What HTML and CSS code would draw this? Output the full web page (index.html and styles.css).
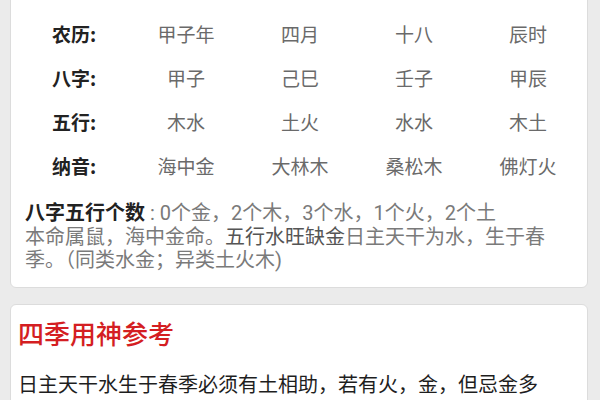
FILE: index.html
```html
<!DOCTYPE html>
<html lang="zh">
<head>
<meta charset="utf-8">
<link rel="stylesheet" href="styles.css">
</head>
<body>
<div class="page">
  <section class="card card-top">
    <div class="table">
      <div class="lbl">公历:</div><div class="val">1984年</div><div class="val">4月</div><div class="val">18日</div><div class="val">8时</div>
      <div class="lbl">农历:</div><div class="val">甲子年</div><div class="val">四月</div><div class="val">十八</div><div class="val">辰时</div>
      <div class="lbl">八字:</div><div class="val">甲子</div><div class="val">己巳</div><div class="val">壬子</div><div class="val">甲辰</div>
      <div class="lbl">五行:</div><div class="val">木水</div><div class="val">土火</div><div class="val">水水</div><div class="val">木土</div>
      <div class="lbl">纳音:</div><div class="val">海中金</div><div class="val">大林木</div><div class="val">桑松木</div><div class="val">佛灯火</div>
    </div>
    <p class="summary"><span class="line"><b>八字五行个数</b> : 0个金，2个木，3个水，1个火，2个土</span><span class="line">本命属鼠，海中金命。<span class="em">五行水旺缺金</span>日主天干为水，生于春季。（同类水金；异类土火木)</span></p>
  </section>
  <section class="card card-second">
    <h2 class="title">四季用神参考</h2>
    <p class="body">日主天干水生于春季必须有土相助，若有火，金，但忌金多</p>
  </section>
</div>
</body>
</html>
```
FILE: styles.css
```css
html, body {
  margin: 0;
  padding: 0;
}
body {
  width: 600px;
  height: 400px;
  overflow: hidden;
  background: #ebebeb;
  font-family: "Noto Sans CJK SC", "Noto Sans", sans-serif;
}
.page {
  display: flex;
  flex-direction: column;
  gap: 16px;
  padding: 0 12px 0 10px;
  margin-top: -34px;
}
.card {
  background: #fff;
  border: 1px solid #dcdcdc;
  border-radius: 6px;
}
.card-top {
  padding: 0 0 14px 0;
}
.table {
  display: grid;
  grid-template-columns: 118px repeat(4, 114px);
  grid-auto-rows: 44px;
  align-items: center;
}
.lbl {
  padding-left: 41px;
  font-size: 19px;
  font-weight: 700;
  color: #222;
}
.val {
  text-align: center;
  font-size: 19px;
  color: #6a6a6a;
}
.summary {
  margin: 15px 24px 0 14px;
  font-family: "Roboto", "Noto Sans CJK SC", sans-serif;
  font-size: 20px;
  line-height: 23.7px;
  color: #7a7a7a;
}
.summary .line {
  display: block;
}
.summary b {
  color: #222;
  font-weight: 700;
}
.summary .em {
  color: #555;
}
.card-second {
  padding: 13px 20px 20px 7px;
}
.title {
  margin: 0;
  font-size: 26px;
  line-height: 30px;
  font-weight: 500;
  color: #d41e22;
}
.body {
  margin: 23px 0 0 0;
  font-size: 20px;
  line-height: 26px;
  color: #1e1e1e;
}
```
